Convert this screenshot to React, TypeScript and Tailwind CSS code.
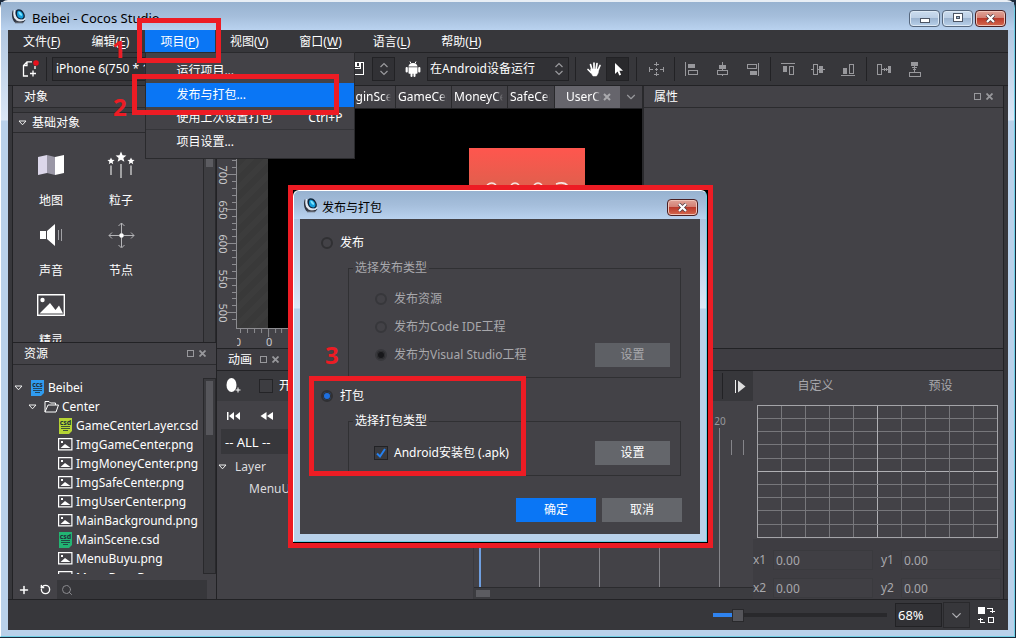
import type { ReactNode } from 'react';
import { ChevronDown, Plus, RotateCcw, Search } from 'lucide-react';

const menus = [
  { label: '文件', key: 'F' },
  { label: '编辑', key: 'E' },
  { label: '项目', key: 'P', active: true },
  { label: '视图', key: 'V' },
  { label: '窗口', key: 'W' },
  { label: '语言', key: 'L' },
  { label: '帮助', key: 'H' },
];

const files = [
  { name: 'GameCenterLayer.csd', color: '#b5d334' },
  { name: 'ImgGameCenter.png' },
  { name: 'ImgMoneyCenter.png' },
  { name: 'ImgSafeCenter.png' },
  { name: 'ImgUserCenter.png' },
  { name: 'MainBackground.png' },
  { name: 'MainScene.csd', color: '#22b573' },
  { name: 'MenuBuyu.png' },
  { name: 'MenuBuyuBg.png' },
];

const CocosLogo = () => (
  <svg viewBox="0 0 16 16" className="h-4 w-4 shrink-0" aria-hidden="true">
    <path d="M2 2C0 6 1 12 4 14.500h8.500L14.500 12 10 13C6 13 3 9 3 5z" fill="#2f3542" />
    <path d="M3.500 2C2 6 3 10 5.500 12c3 1.800 7 1 8.500-1.500L13 12c-3 1-8-1-9-5z" fill="#e8ebf0" stroke="#e8ebf0" />
    <path d="M5 2.500C7 .5 10 1 12 3.500s2.500 5.500 1 7-5.500 1-7-1-2-5-1-7z" fill="#0f2338" />
    <path d="M7 2.800c2-.5 4 1 5 3.200s.6 4-1 4.400-4-.6-4.600-2.400S6 3.500 7 2.800z" fill="#139ddb" />
    <path d="M7.500 3.800C9 3.500 10.500 5 11 6.500s-.5 1.500-1.500 1S7 5 7.500 3.800z" fill="#7be4ff" />
    <path d="M4 14.500h8" stroke="#5d636e" strokeWidth="1.500" />
  </svg>
);

const Glyph = ({ children, size = 16 }: { children: ReactNode; size?: number }) => (
  <svg width={size} height={size} viewBox={`0 0 ${size} ${size}`} fill="none" shapeRendering="crispEdges" aria-hidden="true">
    {children}
  </svg>
);

const Triangle = () => (
  <svg viewBox="0 0 9 6" className="h-[6px] w-[9px] shrink-0" aria-hidden="true">
    <path d="M1 1h7L4.500 4.800z" fill="none" stroke="#eee" />
  </svg>
);

const UpDown = () => (
  <svg viewBox="0 0 10 14" className="h-[14px] w-[10px]" fill="none" stroke="#9a9a9e" strokeWidth="1.200" aria-hidden="true">
    <path d="M1.500 5 5 1.500 8.500 5M1.500 9 5 12.500 8.500 9" />
  </svg>
);

const DockButtons = () => (
  <div className="flex gap-[5px]">
    <button aria-label="浮动">
      <Glyph size={7}><path d="M.5.5h6v6h-6z" stroke="#98989c" /></Glyph>
    </button>
    <button aria-label="关闭">
      <svg viewBox="0 0 7 7" className="h-[7px] w-[7px]" stroke="#98989c" strokeWidth="1.800" aria-hidden="true">
        <path d="M.5.5l6 6M6.500.5l-6 6" />
      </svg>
    </button>
  </div>
);

const CloseButton = () => (
  <button
    aria-label="关闭"
    className="flex h-[17px] w-[31px] items-center justify-center rounded-sm border border-[#4a1f22] bg-[linear-gradient(#e0a498,#d38074_45%,#bb3a2b_50%,#d4694f)] shadow-[inset_0_0_0_1px_#f0c3b8]"
  >
    <svg viewBox="0 0 11 9" className="h-[9px] w-[11px]" aria-hidden="true">
      <path d="M2 1l7 7M9 1L2 8" stroke="#4b3a40" strokeWidth="3.600" />
      <path d="M2 1l7 7M9 1L2 8" stroke="#fff" strokeWidth="2.200" />
    </svg>
  </button>
);

const FrameButton = ({ label, children }: { label: string; children: ReactNode }) => (
  <button
    aria-label={label}
    className="flex h-[17px] w-[31px] items-center justify-center rounded-sm border border-[#56677d] bg-[linear-gradient(#cbdcee,#bccfe5_45%,#9cb4d0_50%,#b8d0ea)] shadow-[inset_0_0_0_1px_#dde9f5]"
  >
    {children}
  </button>
);

const TitleBar = () => (
  <header className="flex h-7 shrink-0 items-center bg-[linear-gradient(#97b2d0,#a5bedb_50%,#b9d2ef)] pr-2 pl-[10px]">
    <CocosLogo />
    <h1 className="ml-[5px] flex-1 pt-1 text-[13px] leading-5 text-black">Beibei - Cocos Studio</h1>
    <div className="flex gap-[2px] pt-1">
      <FrameButton label="最小化">
        <Glyph size={12}><path d="M1.500 6.500h9v4h-9z" fill="#fff" stroke="#4c5564" /></Glyph>
      </FrameButton>
      <FrameButton label="最大化">
        <Glyph size={12}>
          <path d="M1.500 1.500h9v8h-9z" fill="#fff" stroke="#4c5564" />
          <path d="M4.500 4.500h3v2h-3z" fill="#9cb4d0" stroke="#4c5564" />
        </Glyph>
      </FrameButton>
      <CloseButton />
    </div>
  </header>
);

const ProjectMenu = () => (
  <div className="absolute top-[22px] left-0 z-10 w-[210px] border border-[#2a2a2d] bg-[#434247] pt-[6px] pb-1 text-white">
    <button className="block h-6 w-full pl-[30px] text-left">运行项目...</button>
    <button className="block h-6 w-full bg-[#0a76f5] pl-[30px] text-left">发布与打包...</button>
    <button className="flex h-[23px] w-full items-center justify-between border-b border-[#353539] pr-3 pl-[30px]">
      <span>使用上次设置打包</span>
      <span>Ctrl+P</span>
    </button>
    <button className="block h-6 w-full pl-[30px] text-left">项目设置...</button>
  </div>
);

const MenuBar = () => (
  <nav className="flex h-[23px] shrink-0 border-b border-[#222225] bg-[#37373b] text-white">
    {menus.map((m) => (
      <div key={m.key} className="relative">
        <button className={m.active ? 'h-[23px] bg-[#0a76f5] pr-4 pl-[15px]' : 'h-[23px] pr-4 pl-[15px]'}>
          {m.label}(<span className="underline underline-offset-2">{m.key}</span>)
        </button>
        {m.active && <ProjectMenu />}
      </div>
    ))}
  </nav>
);

const alignGroups: { label: string; icon: ReactNode }[][] = [
  [
    { label: '左对齐', icon: <><path d="M1.500 1v14" stroke="#98989c" /><path d="M4 3h7v4H4z" fill="#98989c" /><path d="M4.500 9.500h9v4h-9z" stroke="#98989c" /></> },
    { label: '水平居中', icon: <><path d="M8.500 1v14" stroke="#98989c" /><path d="M5 4h7v4H5z" fill="#98989c" /><path d="M3.500 9.500h10v4h-10z" stroke="#98989c" fill="#37373b" /></> },
    { label: '右对齐', icon: <><path d="M14.500 2v13" stroke="#98989c" /><path d="M6 10h7v4H6z" fill="#98989c" /><path d="M3.500 3.500h9v4h-9z" stroke="#98989c" /></> },
  ],
  [
    { label: '顶对齐', icon: <><path d="M1 2.500h14" stroke="#98989c" /><path d="M3 5h4v6H3z" fill="#98989c" /><path d="M9.500 5.500h4v8h-4z" stroke="#98989c" /></> },
    { label: '垂直居中', icon: <><path d="M1 8.500h14" stroke="#98989c" /><path d="M3.500 3.500h4v10h-4z" stroke="#98989c" fill="#37373b" /><path d="M9 5h4v7H9z" fill="#98989c" /></> },
    { label: '底对齐', icon: <><path d="M1 14.500h14" stroke="#98989c" /><path d="M3 7h4v6H3z" fill="#98989c" /><path d="M9.500 3.500h4v9h-4z" stroke="#98989c" /></> },
  ],
  [
    { label: '水平分布', icon: <><path d="M1.500 3.500h4v10h-4zM6 8.500h6M8.500 7v3M10.500 7v3" stroke="#98989c" /><path d="M12 5h3v7h-3z" fill="#98989c" /></> },
    { label: '垂直分布', icon: <><path d="M5 1h7v4H5z" fill="#98989c" /><path d="M3.500 11.500h11v4h-11zM8.500 5v6M6 6.500h5M7 8.500h3" stroke="#98989c" /></> },
  ],
];

const Separator = () => <div className="mr-[2px] ml-[3px] h-6 w-px shrink-0 bg-[#222225]" />;

const Toolbar = () => (
  <div className="flex h-[33px] shrink-0 items-center border-b border-[#222225] bg-[#37373b]">
    <button aria-label="新建" className="flex w-[35px] justify-center pl-2">
      <svg viewBox="0 0 18 18" className="h-[18px] w-[18px]" fill="none" stroke="#fff" strokeWidth="1.300" aria-hidden="true">
        <path d="M7 16H2.500V5.500L6 1.800h5M2.500 5.500H6V1.800M14 6v3M12 10.500v6M9 13.500h6" />
        <circle cx="15" cy="3" r="2.800" fill="#e8101c" stroke="none" />
      </svg>
    </button>
    <Separator />
    <select aria-label="设备" className="ml-[3px] h-6 w-[292px] shrink-0 appearance-none border border-[#222225] bg-[#313135] px-[3px] text-white">
      <option>iPhone 6(750 * 1334)</option>
    </select>
    <button aria-label="保存" className="mr-1 flex w-6 shrink-0 justify-center pl-[2px]">
      <Glyph><path d="M1 1.500h13.500v12H1M5 2h6v5H5z" stroke="#fff" /><path d="M5 2h6v4H5z" fill="#fff" /><path d="M8 2h2v3H8z" fill="#37373b" /></Glyph>
    </button>
    <button aria-label="旋转方向" className="flex h-6 w-[23px] shrink-0 items-center justify-center border border-[#222225] bg-[#313135]">
      <UpDown />
    </button>
    <span className="ml-[6px] flex w-6 shrink-0 justify-center">
      <svg viewBox="0 0 16 16" className="h-4 w-4" fill="#fff" aria-hidden="true">
        <path d="M3.500 5.500C3.700 3.500 5.500 2 8 2s4.300 1.500 4.500 3.500zM3.500 6.200h9V12q0 .8-.8.8h-1.200V15q0 1-1 1t-1-1v-2.200h-1V15q0 1-1 1t-1-1v-2.200H4.300q-.8 0-.8-.8z" />
        <rect x=".6" y="6" width="2.200" height="5.500" rx="1" />
        <rect x="13.200" y="6" width="2.200" height="5.500" rx="1" />
        <path d="M5 .5 6 2.500M11 .5l-1 2" stroke="#fff" />
      </svg>
    </span>
    <div className="relative ml-[2px] w-[142px] shrink-0">
      <select aria-label="运行设备" className="h-6 w-full appearance-none border border-[#222225] bg-[#313135] px-[2px] text-white">
        <option>在Android设备运行</option>
      </select>
      <span className="pointer-events-none absolute top-[5px] right-[5px]"><UpDown /></span>
    </div>
    <div className="mr-[6px] ml-[6px] h-6 w-px shrink-0 bg-[#222225]" />
    <button aria-label="移动画布" className="flex w-6 shrink-0 justify-center">
      <svg viewBox="0 0 16 16" className="h-4 w-4" stroke="#fff" strokeWidth="1.700" strokeLinecap="round" fill="#fff" aria-hidden="true">
        <path d="M5.800 8 4.500 3.500M8 7.500V2M10.200 7.500l.8-5M12.300 8.500l1.700-4M5 11.500 2 8.500" />
        <path d="M5 8h7.800l-.6 4-1.700 3H7l-2.500-4z" strokeWidth=".5" />
      </svg>
    </button>
    <button aria-label="选择" className="flex h-6 w-[23px] shrink-0 items-center justify-center border border-[#222225] bg-[#29292c]">
      <svg viewBox="0 0 12 14" className="h-[14px] w-3" fill="#fff" aria-hidden="true">
        <path d="M3 1v11l2.600-2.500 1.700 4 1.800-.8-1.700-3.900H11z" />
      </svg>
    </button>
    <div className="mr-1 ml-[7px] h-6 w-px shrink-0 bg-[#222225]" />
    <button aria-label="锚点" className="flex w-[30px] shrink-0 justify-center">
      <Glyph><path d="M8.500 1v4M6 3.500h5M8.500 11v4M6 13.500h5M1.500 6v5M2 8.500h3M15.500 6v5M12 8.500h3M7 8.500h3M8.500 7v3" stroke="#98989c" /></Glyph>
    </button>
    {alignGroups.map((group, i) => (
      <div key={i} className="flex items-center">
        <Separator />
        {group.map((g) => (
          <button key={g.label} aria-label={g.label} className="flex w-[30px] justify-center">
            <Glyph>{g.icon}</Glyph>
          </button>
        ))}
      </div>
    ))}
  </div>
);

const ObjectItem = ({ label, children }: { label: string; children: ReactNode }) => (
  <div className="flex flex-col items-center">
    <div className="flex h-9 items-center">{children}</div>
    <div className="h-[34px] leading-9">{label}</div>
  </div>
);

const PictureIcon = () => (
  <svg viewBox="0 0 28 22" className="h-[22px] w-7" aria-hidden="true">
    <path d="M.7.700h26.600v20.600H.7z" fill="none" stroke="#fff" strokeWidth="1.400" />
    <circle cx="5.500" cy="6" r="2.200" fill="#fff" />
    <path d="M2.500 19.500 13 9l5.500 7 3.500-4.500 4 8z" fill="#fff" />
  </svg>
);

const star = 'M0-4.500 1.300-1.500 4.500-1.300 2 .9 2.800 4 0 2.300-2.800 4-2 .9-4.500-1.300-1.300-1.500z';

const ObjectPanel = () => (
  <section className="flex h-[257px] shrink-0 flex-col border-b border-[#222225]">
    <div className="flex h-[22px] shrink-0 items-center border-b border-[#2b2b2e] pt-px pl-[11px]">对象</div>
    <div className="h-1 shrink-0 bg-[#3c3c40]" />
    <div className="flex h-[21px] shrink-0 items-center gap-[5px] border-y border-[#2b2b2e] pl-[5px]">
      <Triangle />基础对象
    </div>
    <div className="flex min-h-0 flex-1">
      <div className="grid flex-1 grid-cols-[70px_70px] content-start overflow-hidden pt-[14px] pl-[3px]">
        <ObjectItem label="地图">
          <svg viewBox="0 0 26 20" className="h-5 w-[26px]" aria-hidden="true">
            <path d="M0 2 9 0v18l-9 2z" fill="#dcd7ea" /><path d="M9 0l8 2v18l-8-2z" fill="#9a97a6" /><path d="M17 2l9-2v18l-9 2z" fill="#fff" />
          </svg>
        </ObjectItem>
        <ObjectItem label="粒子">
          <svg viewBox="0 0 28 28" className="h-7 w-7" fill="#fff" aria-hidden="true">
            <path d={star} transform="translate(14 6) scale(1.200)" />
            <path d={star} transform="translate(4 10) scale(.8)" />
            <path d={star} transform="translate(24 10) scale(.8)" />
            <path d="M13.500 13h1v14h-1zM3.500 14.500h1V24h-1zM23.500 14.500h1V24h-1z" />
          </svg>
        </ObjectItem>
        <ObjectItem label="声音">
          <svg viewBox="0 0 24 24" className="h-6 w-6" aria-hidden="true">
            <path d="M1 8h6v8H1zM8 8l8-7v22l-8-7z" fill="#fff" />
            <path d="M19.500 7v10M22.500 6v12" stroke="#a2a2a6" />
          </svg>
        </ObjectItem>
        <ObjectItem label="节点">
          <svg viewBox="0 0 27 27" className="h-[27px] w-[27px]" fill="none" stroke="#b5b5b8" aria-hidden="true">
            <path d="M13.500 1v24M1 13.500h25M10.500 4l3-3 3 3M10.500 23l3 3 3-3M4 10.500l-3 3 3 3M23 10.500l3 3-3 3" />
            <path d="M12 12h3v3h-3z" fill="#fff" stroke="#fff" />
          </svg>
        </ObjectItem>
        <ObjectItem label="精灵"><PictureIcon /></ObjectItem>
      </div>
      <div className="w-[13px] border-x border-[#29292c] bg-[#3e3e42] px-[2px]">
        <div className="mt-6 h-[10px] bg-[#5c5c61]" />
      </div>
    </div>
  </section>
);

const FileIcon = ({ color, tag }: { color?: string; tag?: string }) =>
  color ? (
    <svg viewBox="0 0 13 16" className="h-4 w-[15px] shrink-0" aria-hidden="true">
      <path d="M0 0h13v13l-3 3H0z" fill={color} />
      <text x="6.500" y="6.500" fontSize="7" fontWeight="700" textAnchor="middle" fill="#20303a">{tag}</text>
      <path d="M2 8.500h9M2 10.500h9M4 12.500h5" stroke="#20303a" strokeWidth=".8" />
    </svg>
  ) : (
    <svg viewBox="0 0 15 13" className="h-[13px] w-[15px] shrink-0" aria-hidden="true">
      <path d="M.6.600h13.300v11.300H.6z" fill="none" stroke="#fff" strokeWidth="1.200" />
      <path d="M2.500 10 7 6l5.500 4z" fill="#fff" /><path d="M3 3h2v2H3z" fill="#fff" />
    </svg>
  );

const ResourcePanel = () => (
  <section className="flex min-h-0 flex-1 flex-col">
    <div className="flex h-[22px] shrink-0 items-center justify-between border-b border-[#2b2b2e] pr-[10px] pl-[11px]">
      资源
      <DockButtons />
    </div>
    <div className="mt-[13px] flex min-h-0 flex-1">
      <ul className="min-w-0 flex-1 overflow-hidden">
        <li className="flex h-[19px] items-center gap-[3px] pl-px">
          <Triangle /><span className="ml-1 flex"><FileIcon color="#2f9bf0" tag="ccs" /></span>Beibei
        </li>
        <li className="flex h-[19px] items-center gap-[3px] pl-[15px]">
          <Triangle />
          <svg viewBox="0 0 15 13" className="ml-1 h-[13px] w-[15px] shrink-0" fill="none" stroke="#fff" aria-hidden="true">
            <path d="M1 12V1.500h4L6.500 3h5v2M1 12 4 5h10.500L12 12z" />
          </svg>
          Center
        </li>
        {files.map((f) => (
          <li key={f.name} className="flex h-[19px] items-center gap-[3px] pl-[45px]">
            <FileIcon color={f.color} tag="csd" />{f.name}
          </li>
        ))}
      </ul>
      <div className="w-[13px] border border-[#29292c] bg-[#3a3a3e] px-[2px] pt-[2px]">
        <div className="h-[54px] bg-[#56565b]" />
      </div>
    </div>
    <div className="flex h-[25px] shrink-0 items-end pr-[9px]">
      <button aria-label="添加" className="flex h-[19px] w-[21px] items-center justify-center"><Plus size={12} strokeWidth={3} /></button>
      <button aria-label="刷新" className="flex h-[19px] w-[23px] items-center justify-center"><RotateCcw size={11} strokeWidth={3} /></button>
      <label className="flex h-[19px] min-w-0 flex-1 items-center bg-[#37373b] pl-1 text-[#8a8a8e]">
        <Search size={12} />
        <input aria-label="搜索" className="min-w-0 flex-1 bg-transparent px-1 outline-none" />
      </label>
    </div>
  </section>
);

const tabs = [
  { name: 'LoginSce', width: 'w-[56px]' },
  { name: 'GameCen', width: 'w-[56px]' },
  { name: 'MoneyCe', width: 'w-[56px]' },
  { name: 'SafeCent', width: 'w-[47px]' },
];

const Stage = () => (
  <section className="flex w-[425px] shrink-0 flex-col overflow-hidden">
    <div className="flex h-[23px] shrink-0 justify-end border-b border-[#222225] bg-[#434247]">
      {tabs.map((t) => (
        <button key={t.name} className={`${t.width} shrink-0 overflow-hidden border-r border-[#29292c] pr-1 pl-[2px] text-left`}>
          <span className="block overflow-hidden whitespace-nowrap [mask-image:linear-gradient(to_right,#000_85%,transparent)]">{t.name}</span>
        </button>
      ))}
      <div className="flex w-[65px] shrink-0 items-center bg-[#66656c] pl-[11px]">
        <button className="w-[35px] overflow-hidden whitespace-nowrap [mask-image:linear-gradient(to_right,#000_80%,transparent)]">UserCe</button>
        <button aria-label="关闭标签" className="ml-[2px]">
          <svg viewBox="0 0 8 8" className="h-2 w-2" stroke="#aaaaae" strokeWidth="2" aria-hidden="true"><path d="M1 1l6 6M7 1 1 7" /></svg>
        </button>
      </div>
      <button aria-label="更多标签" className="flex w-[22px] shrink-0 items-center justify-center text-[#98989c]"><ChevronDown size={14} /></button>
    </div>
    <div className="flex min-h-0 flex-1">
      <svg className="h-full w-5 shrink-0" viewBox="0 0 20 240" preserveAspectRatio="xMinYMin slice" aria-hidden="true">
        <path d="M19.500 0v220" stroke="#8c8c90" />
        {Array.from({ length: 31 }, (_, i) => (
          <path key={i} d={`M${(i + 1) % 5 === 0 ? 10 : 15} ${11 + Math.round((i - 1) * 6.900) - 0.5}h${(i + 1) % 5 === 0 ? 9 : 4}`} stroke="#8c8c90" />
        ))}
        {[700, 650, 600, 550, 500].map((n, i) => (
          <text key={n} transform={`translate(2 ${66 + Math.round(i * 34.500)}) rotate(90)`} fontSize="11" textAnchor="middle" fill="#c9c9cc">{n}</text>
        ))}
      </svg>
      <div className="flex min-w-0 flex-1 flex-col">
        <div className="flex min-h-0 flex-1">
          <div className="w-[31px] shrink-0 bg-[repeating-linear-gradient(135deg,#393939_0_6px,#3c3c3c_6px_12px)]" />
          <div className="flex flex-1 items-start bg-black pl-[201px]">
            <svg viewBox="0 0 116 60" className="mt-[39px] h-[60px] w-[116px]" aria-hidden="true">
              <defs>
                <linearGradient id="card" x2="0" y2="1"><stop stopColor="#ff564e" /><stop offset="1" stopColor="#d0644c" /></linearGradient>
              </defs>
              <path d="M0 0h116v60H0z" fill="url(#card)" />
              <path d="M18 37q5-4 9 0M42 37q4-4 8 0M65 37q4-4 8 0M87 36q8-3 12 2" fill="none" stroke="#f6e4e0" strokeWidth="1.500" />
            </svg>
          </div>
        </div>
        <svg className="h-5 w-full shrink-0" viewBox="0 0 404 20" preserveAspectRatio="xMinYMin slice" aria-hidden="true">
          <path d="M0 .5h404" stroke="#8c8c90" />
          {Array.from({ length: 58 }, (_, i) => (
            <path key={i} d={`M${Math.round(3 + i * 6.900) + 0.5} 0v${i % 5 === 4 ? 9 : 5}`} stroke="#8c8c90" />
          ))}
          <text x="1" y="18" fontSize="11" textAnchor="middle" fill="#c9c9cc">0</text>
          <text x="32" y="18" fontSize="11" textAnchor="middle" fill="#c9c9cc">0</text>
        </svg>
      </div>
    </div>
  </section>
);

const PropertyPanel = () => (
  <section className="flex-1 border-l-2 border-[#29292c] bg-[#434247]">
    <div className="flex h-[22px] items-center justify-between border-b border-[#2b2b2e] pr-[10px] pl-[10px]">
      属性
      <DockButtons />
    </div>
  </section>
);

const CurveField = ({ name }: { name: string }) => (
  <label className="flex h-5 min-w-0 flex-1 items-center">
    <span className="w-5 shrink-0">{name}</span>
    <input defaultValue="0.00" className="h-5 min-w-0 flex-1 border border-[#3a3a3e] bg-[#403f44] px-[2px] outline-none" />
  </label>
);

const CurvePanel = () => (
  <div className="flex w-[250px] shrink-0 flex-col text-[#a8a8ac]">
    <div className="flex h-[34px] shrink-0">
      <button className="flex-1 pb-1">自定义</button>
      <button className="flex-1 pb-1">预设</button>
    </div>
    <svg className="mx-1 h-[134px] shrink-0" viewBox="0 0 242 134" preserveAspectRatio="none" fill="none" shapeRendering="crispEdges" aria-hidden="true">
      {Array.from({ length: 9 }, (_, i) => (
        <path key={i} d={`M${24.500 + i * 24} 0v133M0 ${14 + Math.round(i * 13.200) - 0.5}h241`} stroke={i === 4 ? '#b0b0b4' : '#77777b'} />
      ))}
      <path d="M.5.5h240v132H.5z" stroke="#a4a4a8" />
    </svg>
    <div className="flex flex-1 flex-col justify-end gap-2 bg-[#3e3d42] pr-[2px] pb-px">
      <div className="flex gap-2"><CurveField name="x1" /><CurveField name="y1" /></div>
      <div className="flex gap-2"><CurveField name="x2" /><CurveField name="y2" /></div>
    </div>
  </div>
);

const AnimationPanel = () => (
  <section className="flex min-h-0 flex-1 flex-col border-t border-[#222225]">
    <div className="flex h-[22px] shrink-0 items-center gap-2 border-b border-[#222225] bg-[#3e3d42] pl-[11px]">
      动画
      <DockButtons />
    </div>
    <div className="flex min-h-0 flex-1">
      <div className="flex w-[256px] shrink-0 flex-col overflow-hidden">
        <div className="flex h-[30px] shrink-0 items-center bg-[#3a3a3e] pl-[9px]">
          <button aria-label="添加关键帧" className="flex w-[33px]">
            <svg viewBox="0 0 15 16" className="h-4 w-[15px]" aria-hidden="true">
              <ellipse cx="5.500" cy="7" rx="5" ry="7" fill="#fff" /><path d="M12 9.500v5M9.500 12h5" stroke="#fff" />
            </svg>
          </button>
          <label className="flex items-center gap-[6px] whitespace-nowrap">
            <input type="checkbox" className="h-[14px] w-[14px] appearance-none border border-[#242427] bg-[#3d3d41]" />
            开始记录动画
          </label>
        </div>
        <div className="flex h-7 shrink-0 items-center gap-[20px] pt-[2px] pl-[10px]">
          <button aria-label="第一帧">
            <svg viewBox="0 0 13 10" className="h-[10px] w-[13px]" fill="#fff" aria-hidden="true"><path d="M0 1h1.500v8H0zM7 1v8L2 5zM13 1v8L8 5z" /></svg>
          </button>
          <button aria-label="上一帧">
            <svg viewBox="0 0 13 10" className="h-[10px] w-[13px]" fill="#fff" aria-hidden="true"><path d="M6.500 1v8L.5 5zM13 1v8L7 5z" /></svg>
          </button>
        </div>
        <select aria-label="动画列表" className="ml-1 h-[25px] shrink-0 appearance-none bg-[#37373b] px-1 text-[13px] text-white">
          <option>-- ALL --</option>
        </select>
        <div className="flex h-[25px] shrink-0 items-center gap-2 pl-px text-[#dcdcdf]"><Triangle />Layer</div>
        <div className="flex h-5 shrink-0 items-center pl-8 text-[#dcdcdf]">MenuUserCenter</div>
      </div>
      <div className="flex min-w-0 flex-1 flex-col border-l border-[#3a3a3e]">
        <div className="flex h-[30px] shrink-0 justify-end bg-[#37373b]">
          <button aria-label="播放" className="my-[2px] flex w-[31px] items-center justify-center border-l border-[#222225] pl-1">
            <svg viewBox="0 0 11 13" className="h-[13px] w-[11px]" aria-hidden="true"><path d="M.5 0v13" stroke="#eee" /><path d="M3 .5v12l7.500-6z" fill="#ddd" /></svg>
          </button>
        </div>
        <svg className="min-h-0 w-full flex-1" viewBox="0 0 279 186" preserveAspectRatio="xMinYMin slice" shapeRendering="crispEdges" aria-hidden="true">
          <path d="M65.500 27v170M125.500 27v170M185.500 27v170M245.500 27v170" stroke="#85858a" />
          <path d="M6 27v170" stroke="#6f9fe0" strokeWidth="2" />
          <text x="246" y="24" fontSize="10" textAnchor="middle" fill="#98989c">20</text>
          <path d="M257.500 39v15M269.500 39v15" stroke="#85858a" />
        </svg>
        <div className="h-3 shrink-0 border-t border-[#2b2b2e] bg-[#3c3c40] p-[2px]">
          <div className="h-[7px] w-[14px] bg-[#5c5c61]" />
        </div>
      </div>
      <CurvePanel />
    </div>
  </section>
);

const StatusBar = () => (
  <footer className="flex h-[31px] shrink-0 items-center justify-end border-t border-[#222225] bg-[#37373b] pr-[13px]">
    <input
      type="range"
      aria-label="缩放"
      defaultValue={12}
      className="h-[14px] w-[174px] appearance-none bg-[linear-gradient(to_right,#2f83ef_20px,#29292c_20px)] bg-[length:100%_4px] bg-center bg-no-repeat [&::-webkit-slider-thumb]:h-[13px] [&::-webkit-slider-thumb]:w-3 [&::-webkit-slider-thumb]:appearance-none [&::-webkit-slider-thumb]:border [&::-webkit-slider-thumb]:border-[#29292c] [&::-webkit-slider-thumb]:bg-[#55555a]"
    />
    <input aria-label="缩放比例" defaultValue="68%" className="ml-2 h-6 w-[47px] border border-[#222225] bg-[#313135] px-[2px] text-[13px] text-white outline-none" />
    <button aria-label="选择比例" className="ml-px flex h-[26px] w-[27px] items-center justify-center border border-[#29292c] text-[#b0b0b4]"><ChevronDown size={15} /></button>
    <button aria-label="切换布局" className="ml-2">
      <Glyph size={17}>
        <path d="M0 0h7v7H0z" fill="#fff" />
        <path d="M10.500 10.500h5v5h-5zM9 1.500h5.500V6M12 4.500h5M2.500 11v4.500H7M0 12.500h5" stroke="#fff" />
      </Glyph>
    </button>
  </footer>
);

const radioClass =
  'h-3 w-3 shrink-0 appearance-none rounded-full border-2 border-[#303033] bg-[#434247] checked:bg-[#1e6fe0] checked:shadow-[inset_0_0_0_1px_#303033] disabled:border-[#37373b] disabled:checked:bg-[#17171a]';

const PublishDialog = () => (
  <div role="dialog" aria-label="发布与打包" className="absolute top-[185px] left-[288px] z-20 w-[425px] border-[5px] border-[#ed1c24] bg-black">
    <div className="mr-px mb-px rounded-t-md border border-r-[#6fd0e6] border-b-[#6fd0e6] border-t-white border-l-white bg-[linear-gradient(#97b2d0,#a5bedb_14px,#dbe7f6_117px,#b9d1ea_118px)]">
      <div className="flex h-7 items-center rounded-t-md bg-[linear-gradient(#97b2d0,#a5bedb_50%,#b9d2ef)] pr-2 pl-[9px]">
        <CocosLogo />
        <h2 className="ml-[3px] flex-1 pt-[6px] leading-5 text-black">发布与打包</h2>
        <div className="pt-1"><CloseButton /></div>
      </div>
      <form className="mx-[6px] mb-[7px] bg-[#434247] pt-[14px] pr-[19px] pb-3 pl-[21px] text-white">
        <label className="flex h-5 items-center gap-[7px]">
          <input type="radio" name="mode" className={radioClass} />发布
        </label>
        <fieldset disabled className="mt-[6px] ml-[27px] border border-[#303033] pt-2 pr-[10px] pb-2 pl-[26px] text-[#a8a8ac]">
          <legend className="ml-[-22px] px-[2px] leading-[18px]">选择发布类型</legend>
          <label className="flex h-7 items-center gap-[7px]">
            <input type="radio" name="target" className={radioClass} />发布资源
          </label>
          <label className="flex h-7 items-center gap-[7px]">
            <input type="radio" name="target" className={radioClass} />发布为Code IDE工程
          </label>
          <div className="flex h-7 items-center justify-between">
            <label className="flex items-center gap-[7px]">
              <input type="radio" name="target" defaultChecked className={radioClass} />发布为Visual Studio工程
            </label>
            <button type="button" className="h-6 w-[75px] bg-[#5e6065]">设置</button>
          </div>
        </fieldset>
        <label className="mt-2 flex h-5 items-center gap-[7px]">
          <input type="radio" name="mode" defaultChecked className={radioClass} />打包
        </label>
        <fieldset className="mt-[6px] ml-[27px] border border-[#303033] pt-[9px] pr-[10px] pb-2 pl-[25px]">
          <legend className="ml-[-21px] px-[2px] leading-[18px]">选择打包类型</legend>
          <div className="flex h-7 items-center justify-between">
            <label className="flex items-center gap-[6px]">
              <span className="relative flex">
                <input type="checkbox" defaultChecked className="h-[14px] w-[14px] appearance-none border border-[#222225] bg-[#3a3a3e]" />
                <svg viewBox="0 0 14 14" className="pointer-events-none absolute inset-0" fill="none" stroke="#2580f0" strokeWidth="2" aria-hidden="true">
                  <path d="M3 7.500 6 10.500 11 3" />
                </svg>
              </span>
              Android安装包 (.apk)
            </label>
            <button type="button" className="h-6 w-[75px] bg-[#64666b]">设置</button>
          </div>
        </fieldset>
        <div className="mt-[22px] flex justify-end gap-[6px] pl-px">
          <button type="button" className="h-6 w-20 bg-[#0a76f5]">确定</button>
          <button type="button" className="-mr-px h-6 w-20 bg-[#64666b]">取消</button>
        </div>
      </form>
    </div>
  </div>
);

// numbered step markers drawn over the window
const Steps = () => (
  <div className="pointer-events-none text-[24px] leading-6 font-bold text-[#ed1c24]">
    <span className="absolute top-[37px] left-[112px] z-20">1</span>
    <div className="absolute top-[18px] left-[137px] z-20 h-[45px] w-[84px] border-[5px] border-[#ed1c24]" />
    <span className="absolute top-[95px] left-[113px] z-20">2</span>
    <div className="absolute top-[74px] left-[132px] z-20 h-[41px] w-[207px] border-[5px] border-[#ed1c24]" />
    <span className="absolute top-[343px] left-[325px] z-30">3</span>
    <div className="absolute top-[376px] left-[309px] z-30 h-[100px] w-[217px] border-[5px] border-[#ed1c24]" />
  </div>
);

export default function App() {
  return (
    <div className="relative flex h-screen flex-col overflow-hidden bg-[#1c2a3c] pr-px pb-px font-['Noto_Sans','Noto_Sans_CJK_SC',sans-serif] text-[12px] leading-4 text-white">
      <div className="flex min-h-0 flex-1 flex-col rounded-t-lg border border-t-2 border-r-[#6fd0e6] border-b-[#6fd0e6] border-t-[#e8eef5] border-l-white bg-[linear-gradient(#a5bedb,#dbe7f6_118px,#b9d1ea_119px)]">
        <TitleBar />
        <div className="mr-[6px] mb-[6px] ml-[7px] flex min-h-0 flex-1 flex-col bg-[#37373b]">
          <MenuBar />
          <Toolbar />
          <main className="flex min-h-0 flex-1 pr-1 pl-1">
            <div className="flex w-[204px] shrink-0 flex-col border-l border-[#222225] bg-[#434247]">
              <ObjectPanel />
              <ResourcePanel />
            </div>
            <div className="flex min-w-0 flex-1 flex-col border-x border-[#222225] bg-[#434247]">
              <div className="flex h-[262px] shrink-0">
                <Stage />
                <PropertyPanel />
              </div>
              <AnimationPanel />
            </div>
          </main>
          <StatusBar />
        </div>
      </div>
      <PublishDialog />
      <Steps />
    </div>
  );
}
